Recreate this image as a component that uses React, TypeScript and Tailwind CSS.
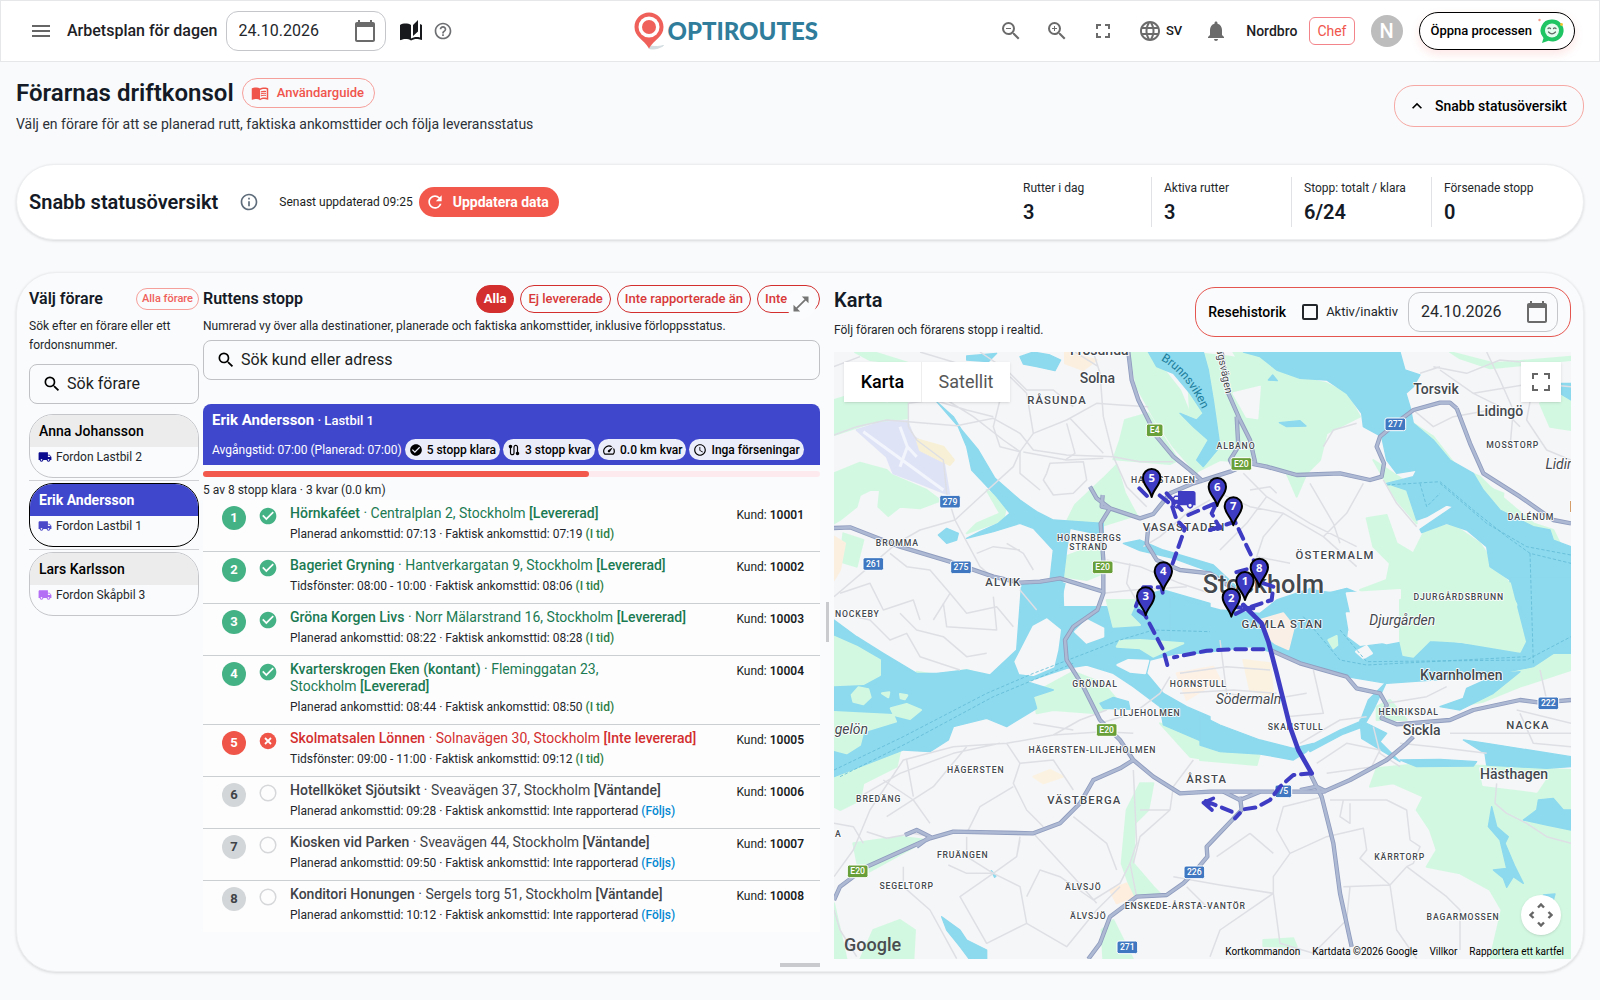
import { useState } from "react";
import type { ReactNode } from "react";
import {
  MdAccessTime,
  MdAutoStories,
  MdCalendarToday,
  MdCheckCircle,
  MdFullscreen,
  MdHelpOutline,
  MdKeyboardArrowUp,
  MdLanguage,
  MdLocalShipping,
  MdMenu,
  MdMenuBook,
  MdNotifications,
  MdOpenInFull,
  MdOutlineInfo,
  MdRefresh,
  MdRoute,
  MdSearch,
  MdSpeed,
  MdZoomIn,
  MdZoomOut,
} from "react-icons/md";

type Tone = "done" | "failed" | "waiting";

interface Stop {
  nr: number;
  name: string;
  street: string;
  tone: Tone;
  planned: string;
  actual: string;
  customer: string;
}

const stops: Stop[] = [
  { nr: 1, name: "Hörnkaféet", street: "Centralplan 2,", tone: "done", planned: "Planerad ankomsttid: 07:13", actual: "07:19", customer: "10001" },
  { nr: 2, name: "Bageriet Gryning", street: "Hantverkargatan 9,", tone: "done", planned: "Tidsfönster: 08:00 - 10:00", actual: "08:06", customer: "10002" },
  { nr: 3, name: "Gröna Korgen Livs", street: "Norr Mälarstrand 16,", tone: "done", planned: "Planerad ankomsttid: 08:22", actual: "08:28", customer: "10003" },
  { nr: 4, name: "Kvarterskrogen Eken (kontant)", street: "Fleminggatan 23,", tone: "done", planned: "Planerad ankomsttid: 08:44", actual: "08:50", customer: "10004" },
  { nr: 5, name: "Skolmatsalen Lönnen", street: "Solnavägen 30,", tone: "failed", planned: "Tidsfönster: 09:00 - 11:00", actual: "09:12", customer: "10005" },
  { nr: 6, name: "Hotellköket Sjöutsikt", street: "Sveavägen 37,", tone: "waiting", planned: "Planerad ankomsttid: 09:28", actual: "Inte rapporterad", customer: "10006" },
  { nr: 7, name: "Kiosken vid Parken", street: "Sveavägen 44,", tone: "waiting", planned: "Planerad ankomsttid: 09:50", actual: "Inte rapporterad", customer: "10007" },
  { nr: 8, name: "Konditori Honungen", street: "Sergels torg 51,", tone: "waiting", planned: "Planerad ankomsttid: 10:12", actual: "Inte rapporterad", customer: "10008" },
];

const tones = {
  done: { text: "text-[#1b7a52]", badge: "bg-[#45b285] text-white", status: "[Levererad]", note: "(I tid)", noteText: "text-[#2e7d46]" },
  failed: { text: "text-[#d32f2f]", badge: "bg-[#ef5548] text-white", status: "[Inte levererad]", note: "(I tid)", noteText: "text-[#2e7d46]" },
  waiting: { text: "text-[#3f4347]", badge: "bg-[#d3d6d8] text-[#3f4347]", status: "[Väntande]", note: "(Följs)", noteText: "text-[#0288d1]" },
};

const drivers = [
  { name: "Anna Johansson", vehicle: "Fordon Lastbil 2", truck: "text-[#0b0b8f]", active: false },
  { name: "Erik Andersson", vehicle: "Fordon Lastbil 1", truck: "text-[#4a47c8]", active: true },
  { name: "Lars Karlsson", vehicle: "Fordon Skåpbil 3", truck: "text-[#b46ef5]", active: false },
];

const stats = [
  { label: "Rutter i dag", value: "3" },
  { label: "Aktiva rutter", value: "3" },
  { label: "Stopp: totalt / klara", value: "6/24" },
  { label: "Försenade stopp", value: "0" },
];

const filters = ["Alla", "Ej levererade", "Inte rapporterade än"];

function DateField({ label, wide }: { label: string; wide?: boolean }) {
  return (
    <label className={`flex h-10 shrink-0 items-center rounded-xl border border-[#c4c6ca] pr-2 pl-3 ${wide ? "w-40" : "w-[150px]"}`}>
      <input aria-label={label} defaultValue="24.10.2026" className="w-full min-w-0 flex-1 bg-transparent text-base text-[#23272b] outline-none" />
      <MdCalendarToday className="size-6 shrink-0 text-[#6b6b6b]" />
    </label>
  );
}

function SearchField({ label }: { label: string }) {
  return (
    <label className="flex h-10 items-center gap-[5px] rounded-lg border border-[#bfc1c5] px-3">
      <MdSearch className="size-5 shrink-0 text-black" />
      <input type="search" aria-label={label} placeholder={label} className="w-full min-w-0 bg-transparent text-base text-[#1b1e22] outline-none placeholder:text-[#1b1e22]" />
    </label>
  );
}

function Logo() {
  return (
    <div className="flex items-center gap-1">
      <svg viewBox="0 0 30 38" className="h-[38px] w-[30px]" aria-hidden="true">
        <path d="M15 36.5C20 38 26 36 29.5 33.5C26 34.5 21 35 17 34z" fill="#d3dce0" stroke="#d3dce0" strokeWidth="1" />
        <path d="M15 0.5C7 .5 .5 7 .5 15C.5 25 9.500 27 15 36.500C20.500 27 29.500 25 29.500 15C29.500 7 23 .5 15 .5z" fill="#f0605a" />
        <circle cx="15" cy="15" r="10.500" fill="#fff" />
        <circle cx="15" cy="15" r="7" fill="#f0605a" />
      </svg>
      <span className="font-[Lato] text-2xl leading-8 font-black text-[#2f7c9b]">OPTIROUTES</span>
    </div>
  );
}

function ChatFace() {
  return (
    <svg viewBox="0 0 26 26" className="size-[26px]" aria-hidden="true">
      <path d="M14 1.500a11 11 0 1 1-3.500 21.200L4 25l1.500-5A11 11 0 0 1 14 1.500z" fill="#1fc463" />
      <circle cx="14" cy="12.500" r="7" fill="#e4fbef" />
      <path d="M10 10.500q1.200-1.200 2.500 0M15.500 10.500q1.200-1.200 2.500 0M10.500 14q3.500 3.500 7 0" fill="none" stroke="#5c6b63" strokeWidth="1.200" strokeLinecap="round" />
      <circle cx="1.500" cy="2" r="1.200" fill="#f59a86" />
      <circle cx="23.500" cy="6.500" r="1.400" fill="#f2c230" />
    </svg>
  );
}

function Header() {
  return (
    <header className="flex h-[62px] items-center justify-between gap-4 border border-[#e5e7e9] bg-white pr-6 pl-[26px]">
      <div className="flex items-center">
        <button aria-label="Meny" className="mr-3 flex size-7 items-center justify-center text-[#666]">
          <MdMenu className="size-6" />
        </button>
        <span className="mr-2 text-base font-medium text-[#1d2125]">Arbetsplan för dagen</span>
        <DateField label="Arbetsdatum" wide />
        <button aria-label="Guide" className="ml-[13px] text-[#17191c]">
          <MdAutoStories className="size-6" />
        </button>
        <button aria-label="Hjälp" className="ml-2.5 text-[#6d6f72]">
          <MdHelpOutline className="size-5" />
        </button>
      </div>
      <Logo />
      <div className="flex items-center text-[#6b6b6b]">
        <button aria-label="Zooma ut" className="mr-[22px]"><MdZoomOut className="size-6" /></button>
        <button aria-label="Zooma in" className="mr-[22px]"><MdZoomIn className="size-6" /></button>
        <button aria-label="Helskärm" className="mr-[23px]"><MdFullscreen className="size-6" /></button>
        <button className="mr-[22px] flex items-center gap-1">
          <MdLanguage className="size-6" />
          <span className="text-[13px] font-medium text-[#17191c]">SV</span>
        </button>
        <button aria-label="Aviseringar" className="mr-[18px]"><MdNotifications className="size-6" /></button>
        <span className="mr-3 text-sm font-medium text-[#1d2125]">Nordbro</span>
        <span className="mr-4 flex h-7 items-center rounded-md border border-[#f2848a] px-[7px] text-sm text-[#f0554c]">Chef</span>
        <span className="mr-4 flex size-8 items-center justify-center rounded-full bg-[#bdbdbd] text-xl font-medium text-white">N</span>
        <button className="flex h-[38px] items-center gap-1.5 rounded-full border border-black bg-white pr-2.5 pl-[11px] text-[13px] font-medium text-black shadow-[0_4px_10px_rgba(241,90,78,0.15)]">
          Öppna processen
          <ChatFace />
        </button>
      </div>
    </header>
  );
}

function StatusCard() {
  return (
    <section className="flex h-[76px] items-center rounded-[38px] border border-[#eceef0] bg-white px-3 shadow-[0_1px_3px_rgba(0,0,0,0.14)]">
      <h2 className="mr-[21px] text-xl font-semibold text-[#141a26]">Snabb statusöversikt</h2>
      <MdOutlineInfo className="mr-5 size-5 text-[#5d6b7a]" />
      <span className="mr-1.5 text-xs text-[#1b1e22]">Senast uppdaterad 09:25</span>
      <button className="flex h-[30px] items-center gap-2 rounded-full bg-[#f2594c] pr-2.5 pl-1.5 text-sm font-bold text-white">
        <MdRefresh className="size-5" />
        Uppdatera data
      </button>
      <dl className="ml-auto grid grid-cols-4">
        {stats.map((s, i) => (
          <div key={s.label} className={`flex h-[50px] w-[140px] flex-col justify-center gap-1 pl-3 ${i > 0 ? "border-l border-[#e0e2e5]" : ""}`}>
            <dt className="text-xs leading-4 text-[#23272b]">{s.label}</dt>
            <dd className="text-xl leading-6 font-semibold text-[#141a26]">{s.value}</dd>
          </div>
        ))}
      </dl>
    </section>
  );
}

function DriverColumn() {
  return (
    <section className="w-[170px] shrink-0">
      <div className="mt-[3px] flex h-[22px] items-center justify-between">
        <h2 className="text-base font-semibold text-[#141a26]">Välj förare</h2>
        <button className="flex h-[22px] items-center rounded-full border border-[#f6a09b] px-[5px] text-[11px] font-medium text-[#f0605a]">Alla förare</button>
      </div>
      <p className="mt-[7px] mb-[9px] text-xs leading-[19px] text-[#23272b]">
        Sök efter en förare eller ett fordonsnummer.
      </p>
      <SearchField label="Sök förare" />
      <ul className="mt-2.5 flex flex-col">
        {drivers.map((d, i) => (
          <li key={d.name} className={i > 0 ? "mt-0.5 border-t border-[#cfd1d4] pt-0.5" : ""}>
            <button className={`flex h-16 w-full flex-col justify-start overflow-hidden rounded-3xl border text-left ${d.active ? "border-black" : "border-[#c4c6ca]"}`}>
              <span className={`flex h-8 w-full items-center pl-[9px] text-sm ${d.active ? "bg-[#3f47cc] font-bold text-white" : "bg-[#ececed] font-medium text-black"}`}>{d.name}</span>
              <span className="flex h-[19px] items-center gap-1 pl-2 text-xs text-[#23272b]">
                <MdLocalShipping className={`size-[14px] ${d.truck}`} />
                {d.vehicle}
              </span>
            </button>
          </li>
        ))}
      </ul>
    </section>
  );
}

function StatusMark({ tone }: { tone: Tone }) {
  if (tone === "done") return <MdCheckCircle className="size-5 text-[#45b285]" />;
  if (tone === "failed")
    return (
      <svg viewBox="0 0 20 20" className="size-5" aria-hidden="true">
        <circle cx="10" cy="10" r="8.300" fill="#ef5548" />
        <path d="M7 7l6 6M13 7l-6 6" stroke="#fff" strokeWidth="1.800" />
      </svg>
    );
  return (
    <svg viewBox="0 0 20 20" className="size-5" aria-hidden="true">
      <circle cx="10" cy="10" r="7.800" fill="none" stroke="#d5d7d9" strokeWidth="1.500" />
    </svg>
  );
}

function SummaryChip({ icon, children }: { icon: ReactNode; children: ReactNode }) {
  return (
    <span className="flex h-[21px] items-center gap-1 rounded-full bg-[#ecedfa] px-1 text-xs font-medium whitespace-nowrap text-black">
      {icon}
      {children}
    </span>
  );
}

function StopColumn() {
  const [filter, setFilter] = useState("Alla");
  return (
    <section className="relative flex w-[617px] shrink-0 flex-col">
      <div className="flex h-7 items-center justify-between">
        <h2 className="text-base font-semibold text-[#141a26]">Ruttens stopp</h2>
        <div className="relative flex gap-1.5 text-[13px]">
          {filters.map((f) => (
            <button
              key={f}
              onClick={() => setFilter(f)}
              className={`flex h-7 items-center rounded-full border border-[#d32f2f] px-[7px] ${f === filter ? "bg-[#d32f2f] font-bold text-white" : "font-medium text-[#d8383a]"}`}
            >
              {f}
            </button>
          ))}
          <button className="flex h-7 w-[63px] items-center rounded-full border border-[#d32f2f] px-[7px] font-medium text-[#d8383a]">Inte</button>
          <button aria-label="Expandera" className="absolute top-1 right-1 flex size-[30px] items-center justify-center rounded-full bg-[#fbfcfd] text-[#757575]">
            <MdOpenInFull className="size-5" />
          </button>
        </div>
      </div>
      <p className="mt-1 mb-1 text-xs leading-[19px] text-[#23272b]">
        Numrerad vy över alla destinationer, planerade och faktiska ankomsttider, inklusive förloppsstatus.
      </p>
      <SearchField label="Sök kund eller adress" />
      <div className="mt-6 flex h-[61px] flex-col justify-between rounded-t-lg bg-[#3f47cc] px-[9px] pt-1.5 pb-[5px] text-white">
        <p className="text-[13px] leading-5 font-medium">
          <strong className="text-[15px] font-bold">Erik Andersson</strong> · Lastbil 1
        </p>
        <div className="flex items-center gap-[3px]">
          <span className="text-xs whitespace-nowrap">Avgångstid: 07:00 (Planerad: 07:00)</span>
          <SummaryChip icon={<MdCheckCircle className="size-[14px]" />}>5 stopp klara</SummaryChip>
          <SummaryChip icon={<MdRoute className="size-[14px]" />}>3 stopp kvar</SummaryChip>
          <SummaryChip icon={<MdSpeed className="size-[14px]" />}>0.0 km kvar</SummaryChip>
          <SummaryChip icon={<MdAccessTime className="size-[14px]" />}>Inga förseningar</SummaryChip>
        </div>
      </div>
      <div className="mt-1.5 h-1.5 rounded-full bg-[#fdeaee]">
        <div className="h-1.5 w-5/8 rounded-full bg-[#f2594c]" />
      </div>
      <p className="mt-1 text-xs leading-[19px] text-[#23272b]">5 av 8 stopp klara · 3 kvar (0.0 km)</p>
      <ol className="bg-[#fdfdfe]">
        {stops.map((s) => {
          const t = tones[s.tone];
          return (
            <li key={s.nr} className="flex border-b border-[#cccfd2] pt-[5px] pr-4 pb-2 pl-[19px] last:border-b-0">
              <span className={`mt-px flex size-6 items-center justify-center rounded-full text-[13px] font-bold ${t.badge}`}>{s.nr}</span>
              <span className="mt-px ml-3 w-8">
                <StatusMark tone={s.tone} />
              </span>
              <div className="flex-1">
                <p className={`text-sm leading-[17px] ${t.text}`}>
                  <span className="font-medium">{s.name}</span> · {s.street}{" "}
                  <span className="whitespace-nowrap">
                    Stockholm <span className="font-medium">{t.status}</span>
                  </span>
                </p>
                <p className="mt-[3px] text-xs leading-[18px] text-[#23272b]">
                  {s.planned} · Faktisk ankomsttid: {s.actual} <span className={`font-medium ${t.noteText}`}>{t.note}</span>
                </p>
              </div>
              <span className="mt-px text-xs leading-[18px] text-[#1b1e22]">
                Kund: <span className="font-semibold">{s.customer}</span>
              </span>
            </li>
          );
        })}
      </ol>
      <span className="absolute right-0 -bottom-2 h-1 w-10 bg-[#c8cacd]" />
    </section>
  );
}

/* Map drawing. Units are a third of a pixel; the four tiles are offset with translate. */

const Q9 = "translate(1140 0)";
const Q10 = "translate(0 1050)";
const Q11 = "translate(1140 1050)";

const parks: [string | undefined, string][] = [
  [undefined, "M42 420L110 400L200 430L262 425L262 475L150 490L42 525Z"],
  [undefined, "M105 276L160 276L270 310L220 308L150 300Z"],
  [undefined, "M42 640L120 608L200 630L215 645L320 690L362 722L300 745L240 740L205 768L175 740L180 690L150 690L120 705L110 740L60 780L42 790Z"],
  [undefined, "M70 820L130 840L110 920L60 905Z"],
  [undefined, "M930 276L990 276L1080 390L1150 560L1130 640L1060 560L1000 470L950 380Z"],
  [undefined, "M915 480L985 460L1075 600L1050 612L880 598L900 540Z"],
  [undefined, "M765 735L850 655L890 615L915 700L950 765L840 800L740 785Z"],
  [undefined, "M735 890L840 850L850 940L800 960L735 950Z"],
  [undefined, "M500 690L560 730L550 780L440 820L470 790L540 760Z"],
  [Q9, "M-40 276L90 290L200 310L290 350L380 370L440 400L480 470L380 520L360 600L320 640L290 710L260 640L180 610L60 600L-20 640Z"],
  [Q9, "M100 276L180 276L230 330L120 310Z"],
  [Q9, "M500 775L560 765L590 850L640 880L680 800L760 795L840 850L900 940L960 1000L930 1100L600 1160L600 1060L480 990L560 960L570 910L520 860Z"],
  [Q9, "M640 490L700 530L770 620L840 650L870 680L1000 790L1060 810L1080 850L900 770L750 640L640 520Z"],
  [Q9, "M860 680L910 700L905 750L870 740Z"],
  [Q9, "M1020 430L1113 400L1113 510L1050 500Z"],
  [Q9, "M750 276L880 310L1113 290L1113 300L870 325L780 295Z"],
  [Q9, "M520 600L640 680L650 790L590 720L560 670Z"],
  [Q10, "M42 500L240 425L230 470L130 520L120 570L60 600L42 590Z"],
  [Q10, "M290 185L350 195L440 180L510 200L440 250L380 250L300 215Z"],
  [Q10, "M640 250L760 185L850 220L900 280L830 310L700 300L650 310Z"],
  [Q10, "M960 520L1000 520L985 600L945 640L940 760L1000 830L1020 850L940 860L905 760L920 600Z"],
  [Q10, "M100 700L240 680L320 690L120 800Z"],
  [Q10, "M120 1050L160 960L240 930L285 960L280 1050Z"],
  [Q10, "M42 880L60 960L80 1050L42 1050Z"],
  [Q10, "M845 960L880 930L940 1050L850 1050Z"],
  [Q10, "M1020 340L1170 390L1170 450L1110 440Z"],
  [Q11, "M0 405L180 430L170 465L0 450Z"],
  [Q11, "M530 475L680 460L1113 480V1050H870L905 900L870 840L780 790L680 770L710 720L690 660L650 600L670 560L580 520L510 530Z"],
  [Q11, "M900 190L1113 100L1113 180L960 230L850 275L760 290Z"],
  [Q11, "M530 290L570 270L620 330L530 330Z"],
  [Q11, "M190 990L280 985L290 1010L190 1008Z"],
];

const waters: [string | undefined, string][] = [
  [undefined, "M350 425L400 470L425 510L475 570L525 655L600 720L650 755L700 780L850 790V825L750 805L740 870L728 970L735 1160H610L640 990L690 960L700 870L640 805L600 790L520 815L440 835L480 815L535 790L570 760L530 710L455 630L440 560L415 500Z"],
  [undefined, "M355 825L380 805L415 820L410 840L380 850Z"],
  [undefined, "M440 288L530 280L505 305L440 300Z"],
  [undefined, "M600 290L640 276L690 285L722 300L705 332L650 320L610 312Z"],
  [undefined, "M985 276L1150 276L1165 330L1180 420L1200 560L1150 620L1130 600L1165 540L1120 500L1080 460L1130 480L1150 460L1110 400L1060 340L1010 320Z"],
  [undefined, "M910 850L960 840L1030 870L1180 915L1260 990L1230 985L1170 935L1060 895L960 872Z"],
  [Q9, "M130 276L600 276L615 330L660 345L640 380L618 400L630 440L640 490L700 540L750 600L820 640L850 690L900 750L1000 800L1050 810L1060 840L1113 860V1180H930L960 1000L930 960L870 920L860 860L800 810L740 790L665 818L660 808L760 740L740 735L680 770L650 780L620 690L560 670L640 650L650 630L590 640L560 600L545 530L490 500L485 460L440 400L380 360L300 355L230 330L180 290Z"],
  [Q9, "M230 1060L330 985L380 1000L440 985L500 1010L600 1020L560 1040L480 1040L450 1110L330 1090Z"],
  [Q9, "M238 488L300 482L318 498L260 500Z"],
  [Q9, "M205 360L218 345L232 362Z"],
  [Q9, "M1070 370L1113 370V420L1080 400Z"],
  [Q10, "M42 30L110 80L190 130L290 190L350 190L440 180L510 195L590 120L605 -80L735 -80L720 -10L860 -10L930 20L960 -40L1030 -60L1170 -20V110L1050 135L990 150L980 190L1030 250L1100 290L1170 320V405L1100 375L1030 345L1020 290L940 230L880 190L800 165L740 175L620 215L700 240L640 260L650 295L560 350L500 325L400 350L385 390L330 425L250 420L42 500Z"],
  [Q10, "M840 280L880 262L925 275L930 298L850 295Z"],
  [Q10, "M365 920L420 960L440 990L500 1020V1050H450L420 1010L380 960Z"],
  [Q10, "M514 782L528 798L524 802Z"],
  [Q11, "M-90 -40L60 0L180 10L230 -30L320 -60L420 -50L450 0L440 80L480 110L600 95L700 90L780 100L970 120L1000 60L930 -60V-100H1113V80L1060 130L1000 170L900 190L850 200L700 210L560 220L440 200L330 170L230 130L150 110L0 130L-90 130Z"],
  [Q11, "M560 215L520 300L490 350L430 372L330 425L320 412L420 360L480 335L505 270Z"],
  [Q11, "M480 330L560 370L540 395L600 455L485 385Z"],
  [Q11, "M0 315L60 345L180 390L280 415L340 400L320 425L280 450L180 432L60 425L0 405Z"],
  [Q11, "M600 450L720 448L830 455L820 468L650 470Z"],
  [Q11, "M790 390L860 400L1113 440V470L1040 475L940 470L860 465L855 430Z"],
  [Q11, "M720 290L790 265L800 235L900 190L960 185L880 250L780 300Z"],
  [Q11, "M970 630L1010 600L1015 570L1060 565L1090 600L1113 600V660L1040 645Z"],
  [Q11, "M875 590L890 650L925 680L915 700L945 770L970 820L940 800L920 832L910 805L880 780L920 775L900 690L865 650Z"],
  [Q11, "M1030 855L1065 852L1060 870Z"],
];

const islands: [string | undefined, string, string][] = [
  [undefined, "M110 510L180 488L262 483L280 530L330 560L372 610L388 705L300 670L220 640L200 590Z", "#dfe3f6"],
  [undefined, "M290 538L370 560L402 600L390 615L300 570Z", "#f8f0d6"],
  [undefined, "M735 276L830 300L790 330L735 310Z", "#fbefe0"],
  [undefined, "M42 830L75 850L60 930L42 960Z", "#fbefe0"],
  [Q9, "M100 400L180 380L172 475L140 470Z", "#f5f6f7"],
  [Q9, "M440 1060H610V1140L560 1150L450 1120Z", "#f5f6f7"],
  [Q10, "M42 80L110 110L180 150V195L130 222L42 226Z", "#d3f8e2"],
  [Q10, "M95 255L115 232L145 238L152 262L130 283L100 275Z", "#d3f8e2"],
  [Q10, "M186 250L208 247L205 262ZM240 252L262 256L254 268L242 265Z", "#d3f8e2"],
  [Q10, "M212 295L260 282L303 300L270 327L222 315Z", "#d3f8e2"],
  [Q10, "M42 306L220 315L228 335L130 365L120 405L80 430L42 420Z", "#d3f8e2"],
  [Q10, "M586 155L640 50L680 28L720 60L712 120L700 170L640 195L600 190Z", "#f5f6f7"],
  [Q10, "M765 65L800 30L850 55L850 80L800 98Z", "#f5f6f7"],
  [Q10, "M892 165L925 150L985 152L975 190L930 185Z", "#f5f6f7"],
  [Q10, "M890 110L900 92L960 90L1090 100L1000 140L960 115Z", "#d3f8e2"],
  [Q10, "M860 -30L950 -30L930 15L960 45L880 50Z", "#d3f8e2"],
  [Q11, "M180 30L250 10L282 50L265 118L225 100L200 80Z", "#f9efe6"],
  [Q11, "M385 90L410 78L412 105L400 115Z", "#d3f8e2"],
  [Q11, "M468 125L500 108L516 130L490 145Z", "#f5f6f7"],
  [Q11, "M440 -50L600 -60L600 30L560 55L470 85Z", "#f5f6f7"],
  [Q11, "M600 90V-30L930 -80L975 95L960 125L780 95L690 90L640 140L610 135Z", "#d3f8e2"],
  [Q11, "M840 475L880 500L1040 500L1010 545L850 525Z", "#f5f6f7"],
  [Q11, "M-70 190L40 170L60 210L-40 270Z", "#fdf1e6"],
  [Q11, "M130 150L210 160L220 260L150 240Z", "#fbf2e2"],
  [Q10, "M640 500L690 480L730 500L670 520Z", "#fbf2e2"],
  [Q10, "M870 840L920 820L940 860L890 880Z", "#fdeedd"],
];

const minorRoads: [string | undefined, string][] = [
  [undefined, "M42 525L110 500L200 480L265 485L410 497L520 475L600 520L640 570L740 585L880 590L960 605L1060 605"],
  [undefined, "M265 430V500L290 540L370 600L380 700L405 780L480 920L515 950M405 780L300 810L230 850L42 1010"],
  [undefined, "M265 430L340 420L440 450L520 470M380 420L460 470L550 540L600 575L580 620L470 720L405 780"],
  [undefined, "M570 350L620 400L640 520L600 575L600 640L660 690M640 520L740 480L830 430L900 435L985 440M540 420L520 500L540 560L600 575"],
  [undefined, "M820 276L840 340L850 470L880 590L920 680L980 740M750 475L850 580M765 276L835 320M610 576L740 600L850 595M680 640L690 610L790 605L800 660L760 700L700 705L670 660Z"],
  [undefined, "M740 490L765 580L735 600M480 276L560 330L620 390L700 390L760 440M42 320L120 290M300 276L480 330"],
  [undefined, "M560 850L610 880L640 930M470 880L520 860L600 870M210 880L260 920L330 930L390 1000L340 1080M60 1000L150 970L190 1050L280 1020L300 1080M390 1000L440 1060L530 1040L580 1100"],
  [undefined, "M850 1000L940 990L1030 985L1100 980M860 900L960 920L1080 970L1170 1000M930 910L920 970L960 1040M1170 720L1100 760L1020 830L970 860"],
  [Q9, "M130 640L200 710L330 790L470 860M200 710L140 790L60 870M230 700L210 680L150 690M330 670L400 790L420 850M490 670L440 760L370 830M550 660L590 730L650 800M370 560L400 510L470 490M250 760L190 830L170 890L270 910M60 700L150 740L250 760L370 830L470 920"],
  [Q9, "M700 320L800 340L900 300L1000 310M720 330L820 400L900 440L960 500M820 400L1000 370L1113 380M860 276L900 360L940 450L930 560M640 450L700 500L760 470L870 450M1000 370L980 480L1040 570L1113 600M660 340L720 320"],
  [Q10, "M60 10L150 30L210 90L260 70L300 140L420 180M240 10L290 60L370 80L440 140L500 130M370 -20L380 50L530 60L520 -40M600 -60L650 0"],
  [Q10, "M42 800L100 720L150 600L250 450L400 410L560 400L700 375L850 365L940 370M120 560L240 490L400 430L540 400M190 510L280 570L330 640M440 410L340 530L200 620M560 400L600 460L580 520L620 600L670 650M580 530L480 590L440 670M600 460L700 450L760 540M260 450L280 560M700 375L780 330L860 300M640 340L760 360M840 340L940 310L1020 250L1050 200"],
  [Q10, "M250 770L250 830L330 900L410 1046M440 680L440 740L520 790L590 740L600 680M385 765L440 790L520 790L600 830L620 940L500 1000L420 860L520 790M620 860L660 780L720 800L820 870L900 820L930 760M640 670L760 800L830 880M620 940L740 1010L830 900L900 830M760 620L860 700L890 780M600 690L590 740"],
  [Q10, "M960 600L1050 600L1060 530L1120 450M940 480L950 700L930 760L950 860M1050 600L960 680L940 760M1100 830L1170 900"],
  [Q10, "M42 640L100 650L130 700M140 665L200 685L280 670L330 680M42 900L60 960L110 1040"],
  [Q11, "M-60 190L80 170L210 180M60 90L80 250L200 270L320 250M340 180L370 310L260 320M-60 250L100 240L230 250M300 400L420 330L500 320M350 460L440 400L540 420L510 480M520 350L540 430L600 470"],
  [Q11, "M370 560L250 590L230 660L270 730L220 800V850L60 960L30 1040M270 730L380 680L490 655L500 720L480 745L570 825L620 770L740 860L780 900V1020M570 825L430 830M570 825L590 960L650 1046M220 850L60 825L-80 800M390 570L560 570L620 600L630 690L660 710L640 760L620 770M150 670L50 740M150 670L220 730M450 830L440 930L340 1030M220 850L240 1000L340 1030M430 570L420 620L450 640L450 580"],
  [Q11, "M560 280L680 260L740 230M600 400L700 410L860 430M750 370L1113 370M950 300L1113 340M960 310L1000 400L1113 410M1020 180L1040 270M890 520L885 580L920 610L980 640L1040 680L1113 700M380 490L520 470"],
];

const majorRoads: [string | undefined, string][] = [
  [undefined, "M925 276L935 360L955 420L985 480L1010 530L1060 590L1110 630L1150 665"],
  [undefined, "M810 680L830 715L870 745L960 775L1000 762L1050 700L1120 670L1230 635L1290 610L1340 620L1430 645L1560 640L1650 660L1685 650L1692 610L1670 560L1680 530L1740 480L1780 450L1860 428L1890 428L1910 445"],
  [Q9, "M65 276L85 400L120 480L150 540L165 605L100 620L90 600L115 560L110 470"],
  [undefined, "M848 705L845 740L870 745M870 745L842 790L850 900L850 1000L832 1050L760 1100L735 1140L740 1200L790 1280L840 1380L900 1440L940 1500L1000 1550L1080 1600L1170 1595L1510 1595L1590 1560L1700 1500L1760 1450L1780 1430"],
  [Q10, "M940 450L900 475L820 510L780 580L720 640L640 670L400 665L330 685L140 770L60 830L42 870M255 675L290 660L330 680L290 710"],
  [undefined, "M42 804L90 802L240 860L390 905L520 950L600 968L660 965L720 955L850 995"],
  [Q11, "M210 120L300 160L440 200L470 235L540 250L560 285L545 325L590 343L750 330L820 300L960 270L1020 278L1113 270"],
  [Q11, "M330 490L350 530L365 560L400 700L420 850L455 1010M300 540L350 530L380 545M70 545L120 570L180 545"],
  [undefined, "M1260 1610L1265 1650L1160 1760L1162 1790L1120 1840L1090 1870L1040 1905L950 1910L870 1970L840 2050L805 2097"],
  [Q9, "M770 445L810 550L850 640L960 710L1060 780L1113 790"],
  [undefined, "M985 800L980 850L1010 900L1080 930L1170 940L1260 1000"],
];

const ferryLines = "M42 1530L250 1430L500 1300L640 1240L900 1140L1000 1110L1170 1115M60 1550L260 1450L520 1310L760 1210M1700 675L1860 665L1960 750L2060 830L2130 880L2253 910M1800 670L1820 740L1860 700M1860 670L2000 790L2120 860L2253 885M2130 880L2140 1210M1560 1110L1640 1205L2120 1200L2253 1130M1450 1070L1560 1200L1640 1215L2120 1190";

type LabelKind = "area" | "district" | "town" | "place" | "city";

const labelStyle: Record<LabelKind, string> = {
  area: "text-[26px] font-medium tracking-widest",
  district: "text-[34px] font-medium tracking-widest",
  town: "text-[42px] font-medium",
  place: "text-[42px] italic",
  city: "text-[76px] font-medium",
};

const labels: [number, number, string, LabelKind][] = [
  [838, 286, "Frösunda", "town"],
  [832, 370, "Solna", "town"],
  [711, 431, "RÅSUNDA", "district"],
  [1030, 668, "HAGASTADEN", "area"],
  [232, 858, "BROMMA", "area"],
  [808, 842, "HORNSBERGS", "area"],
  [806, 869, "STRAND", "area"],
  [550, 977, "ALVIK", "district"],
  [1092, 813, "VASASTADEN", "district"],
  [112, 1071, "NOCKEBY", "area"],
  [1848, 402, "Torsvik", "town"],
  [2040, 468, "Lidingö", "town"],
  [2078, 563, "MOSSTORP", "area"],
  [2243, 627, "Lidingö", "place"],
  [2133, 779, "DALÉNUM", "area"],
  [1248, 566, "ALBANO", "area"],
  [1545, 896, "ÖSTERMALM", "district"],
  [1916, 1019, "DJURGÅRDSBRUNN", "area"],
  [1330, 998, "Stockholm", "city"],
  [825, 1280, "GRÖNDAL", "area"],
  [1135, 1280, "HORNSTULL", "area"],
  [982, 1367, "LILJEHOLMEN", "area"],
  [817, 1478, "HÄGERSTEN-LILJEHOLMEN", "area"],
  [467, 1538, "HÄGERSTEN", "area"],
  [793, 1632, "VÄSTBERGA", "district"],
  [176, 1625, "BREDÄNG", "area"],
  [428, 1793, "FRUÄNGEN", "area"],
  [260, 1886, "SEGELTORP", "area"],
  [790, 1889, "ÄLVSJÖ", "area"],
  [805, 1976, "ÄLVSJÖ", "area"],
  [1096, 1946, "ENSKEDE-ÅRSTA-VANTÖR", "area"],
  [94, 1421, "gelön", "place"],
  [55, 1731, "A", "area"],
  [1387, 1103, "GAMLA STAN", "district"],
  [1747, 1094, "Djurgården", "place"],
  [1292, 1332, "Södermalm", "place"],
  [1427, 1409, "SKANSTULL", "area"],
  [1924, 1260, "Kvarnholmen", "town"],
  [1766, 1364, "HENRIKSDAL", "area"],
  [1805, 1424, "Sickla", "town"],
  [2124, 1407, "NACKA", "district"],
  [1160, 1568, "ÅRSTA", "district"],
  [2082, 1557, "Hästhagen", "town"],
  [1739, 1799, "KÄRRTORP", "area"],
  [1929, 1979, "BAGARMOSSEN", "area"],
  [2262, 757, "K", "town"],
];

const shields: [number, number, string][] = [
  [1004, 511, "E4"],
  [390, 725, "279"],
  [160, 912, "261"],
  [423, 922, "275"],
  [848, 922, "E20"],
  [1726, 493, "277"],
  [1264, 612, "E20"],
  [860, 1410, "E20"],
  [113, 1834, "E20"],
  [1123, 1837, "226"],
  [922, 2062, "271"],
  [1390, 1594, "75"],
  [2185, 1330, "222"],
];

const pins: [number, number, number][] = [
  [995, 711, 5],
  [1192, 738, 6],
  [1240, 796, 7],
  [1318, 980, 8],
  [1275, 1020, 1],
  [1234, 1070, 2],
  [1030, 991, 4],
  [977, 1066, 3],
];

function MapDrawing() {
  return (
    <svg viewBox="42 276 2211 1821" preserveAspectRatio="xMidYMid slice" className="absolute inset-0 size-full" role="img" aria-label="Karta över Stockholm med förarens rutt">
      <rect x="-2000" y="-2000" width="7000" height="7000" fill="#f5f6f7" />
      <g fill="#d3f8e2">{parks.map(([t, d], i) => <path key={i} d={d} transform={t} stroke="#d3f8e2" strokeWidth="6" strokeLinejoin="round" />)}</g>
      <g fill="#8dd9ee">{waters.map(([t, d], i) => <path key={i} d={d} transform={t} stroke="#8dd9ee" strokeWidth="4" strokeLinejoin="round" />)}</g>
      {islands.map(([t, d, c], i) => <path key={i} d={d} transform={t} fill={c} stroke={c} strokeWidth="6" strokeLinejoin="round" />)}
      <path d="M130 515L370 690M240 500L262 560L240 620M262 560L290 590" fill="none" stroke="#f3f5fd" strokeWidth="9" />
      <path d={ferryLines} fill="none" stroke="#62bcd6" strokeWidth="2.500" strokeDasharray="10 6" />
      <g fill="none" stroke="#dddfe5" strokeWidth="4.500" strokeLinejoin="round">{minorRoads.map(([t, d], i) => <path key={i} d={d} transform={t} />)}</g>
      <g fill="none" stroke="#8f9cbe" strokeWidth="13" strokeLinejoin="round">{majorRoads.map(([t, d], i) => <path key={i} d={d} transform={t} />)}</g>
      <g fill="none" stroke="#adb8d3" strokeWidth="8" strokeLinejoin="round">{majorRoads.map(([t, d], i) => <path key={i} d={d} transform={t} />)}</g>

      {shields.map(([x, y, t], i) => {
        const w = t.length > 2 ? 62 : 50;
        return (
          <g key={i}>
            <rect x={x - w / 2} y={y - 19} width={w} height="38" rx="6" fill={t[0] === "E" ? "#689f38" : "#3f78c0"} stroke="#fff" strokeWidth="3" />
            <text x={x} y={y + 9} textAnchor="middle" fill="#fff" className="text-[26px] font-medium">{t}</text>
          </g>
        );
      })}
      <g fill="#43484e" stroke="#fff" strokeWidth="5" strokeLinejoin="round" textAnchor="middle" style={{ paintOrder: "stroke" }}>
        {labels.map(([x, y, t, k], i) => <text key={i} x={x} y={y} className={labelStyle[k]}>{t}</text>)}
        <text className="text-[32px]" transform="translate(1203 335) rotate(78)">agsvägen</text>
      </g>
      <path id="bay-name" d="M1022 300Q1110 350 1160 480" fill="none" />
      <text className="text-[36px]" fill="#1d7f9c"><textPath href="#bay-name">Brunnsviken</textPath></text>

      <g fill="none" stroke="#3f3cc4" strokeWidth="12" strokeLinejoin="round" strokeLinecap="round">
        <path d="M1270 1035L1325 1090L1345 1145L1370 1240L1390 1320L1410 1400L1435 1470L1475 1540" strokeWidth="14" />
        <g strokeDasharray="32 20">
          <path d="M1475 1540L1420 1545L1380 1580L1350 1620L1310 1642L1270 1648L1245 1675" />
          <path d="M1235 1655L1155 1622" />
          <path d="M1330 1168H1240L1160 1172L1062 1192" />
          <path d="M1042 1215L1030 1170L975 1065L945 1045L970 982L1025 982L1028 998" />
          <path d="M1058 910L1095 805L1070 780L1055 735L1005 695" />
          <path d="M1105 765L1190 728L1175 760L1200 805L1170 810" />
          <path d="M1170 810L1245 785L1310 920L1235 940" />
          <path d="M1330 970L1360 980L1355 1020L1280 1045L1230 1070" />
          <path d="M958 685L985 712M1040 700L1085 750M1230 1040L1300 1045" />
        </g>
        <path d="M1180 1615L1150 1628L1176 1650M1152 1628L1170 1632" strokeWidth="11" />
      </g>
      <path transform="translate(1130 680) scale(-3.300 3.300)" fillRule="evenodd" d="M20 8h-3V4H3c-1.100 0-2 .9-2 2v11h2c0 1.660 1.340 3 3 3s3-1.340 3-3h6c0 1.660 1.340 3 3 3s3-1.340 3-3h2v-5l-3-4zM6 18.500a1.500 1.500 0 1 1 0-3 1.500 1.500 0 0 1 0 3zM18 18.500a1.500 1.500 0 1 1 0-3 1.500 1.500 0 0 1 0 3zM19.500 9.500l2 2.500H17V9.500z" fill="#3f3cc4" />
      {pins.map(([x, y, n]) => (
        <g key={n} transform={`translate(${x} ${y})`}>
          <path d="M0 0C-5 -24 -26 -35 -26 -58A26 26 0 0 1 26 -58C26 -35 5 -24 0 0Z" fill="#3f3cc4" stroke="#000" strokeWidth="6" strokeLinejoin="round" />
          <text x="0" y="-45" textAnchor="middle" fill="#fff" className="font-['Open_Sans'] text-[34px] font-bold">{n}</text>
        </g>
      ))}
    </svg>
  );
}

function MapColumn() {
  return (
    <section className="flex min-w-0 flex-1 flex-col">
      <div className="mb-3 flex items-start justify-between pt-0.5">
        <div>
          <h2 className="text-xl leading-[26px] font-semibold text-[#141a26]">Karta</h2>
          <p className="mt-2 text-xs leading-[19px] text-[#23272b]">Följ föraren och förarens stopp i realtid.</p>
        </div>
        <div className="flex h-[50px] items-center rounded-[20px] border border-[#e5554f] px-3">
          <span className="mr-4 text-sm font-medium text-black">Resehistorik</span>
          <label className="mr-2.5 flex items-center gap-2 text-[13px] text-[#23272b]">
            <input type="checkbox" className="size-4 appearance-none rounded-xs border-2 border-[#23272b] checked:bg-[#23272b]" />
            Aktiv/inaktiv
          </label>
          <DateField label="Historikdatum" />
        </div>
      </div>
      <div className="relative min-h-[400px] flex-1 overflow-hidden">
        <MapDrawing />
        <div className="absolute top-2.5 left-2.5 flex h-10 bg-white text-lg shadow-sm">
          <button className="w-[77px] font-medium text-black">Karta</button>
          <button className="w-[89px] border-l border-[#eee] text-[#565656]">Satellit</button>
        </div>
        <button aria-label="Helskärmsläge" className="absolute top-2.5 right-2.5 flex size-10 items-center justify-center bg-white shadow-sm">
          <svg viewBox="0 0 18 18" className="size-[18px]" aria-hidden="true">
            <path d="M1 6V1h5M12 1h5v5M17 12v5h-5M6 17H1v-5" fill="none" stroke="#666" strokeWidth="2" />
          </svg>
        </button>
        <button aria-label="Kamerakontroller" className="absolute right-2.5 bottom-6 flex size-10 items-center justify-center rounded-full bg-white shadow-sm">
          <svg viewBox="0 0 24 24" className="size-6" aria-hidden="true">
            <path d="M9 4.500L12 1.500L15 4.500M9 19.500L12 22.500L15 19.500M4.500 9L1.500 12L4.500 15M19.500 9L22.500 12L19.500 15" fill="none" stroke="#666" strokeWidth="2.400" />
          </svg>
        </button>
        <span className="absolute bottom-0.5 left-2.5 text-lg leading-6 font-medium text-[#4a4d50]">Google</span>
        <div className="absolute right-[7px] bottom-0 flex gap-3 text-[10px] leading-[14px] whitespace-nowrap text-black">
          <button>Kortkommandon</button>
          <span>Kartdata ©2026 Google</span>
          <a href="#villkor">Villkor</a>
          <a href="#rapportera">Rapportera ett kartfel</a>
        </div>
      </div>
    </section>
  );
}

export default function App() {
  return (
    <div className="flex min-h-screen flex-col bg-[#f9fafc] font-[Roboto,sans-serif]">
      <Header />
      <main className="flex flex-1 flex-col px-4 pb-7">
        <div className="flex items-center justify-between pt-4">
          <div>
            <div className="flex items-center gap-2">
              <h1 className="text-2xl leading-[30px] font-semibold text-[#141a26]">Förarnas driftkonsol</h1>
              <a href="#guide" className="flex h-[30px] items-center gap-2 rounded-full border border-[#f6a09b] pr-2.5 pl-2 text-[13px] font-medium text-[#f0554c]">
                <MdMenuBook className="size-[18px]" />
                Användarguide
              </a>
            </div>
            <p className="mt-1.5 text-sm text-[#2c3138]">Välj en förare för att se planerad rutt, faktiska ankomsttider och följa leveransstatus</p>
          </div>
          <button className="flex h-[42px] items-center gap-2 rounded-[20px] border border-[#f6a9a4] pr-4 pl-3 text-sm font-medium text-black">
            <MdKeyboardArrowUp className="size-5" />
            Snabb statusöversikt
          </button>
        </div>
        <div className="mt-[30px]">
          <StatusCard />
        </div>
        <div className="mt-8 flex flex-1 rounded-[40px] border border-[#eceef0] bg-[#fafbfc] p-3 shadow-[0_1px_3px_rgba(0,0,0,0.14)]">
          <div className="flex w-full gap-1">
            <DriverColumn />
            <StopColumn />
            <div className="flex w-1.5 items-center pl-0.5">
              <span className="h-10 w-[3px] bg-[#c8cacd]" />
            </div>
            <MapColumn />
          </div>
        </div>
      </main>
    </div>
  );
}
